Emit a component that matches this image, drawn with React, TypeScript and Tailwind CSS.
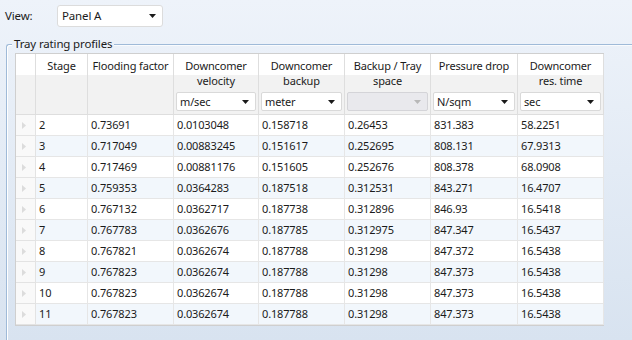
import React from "react";

const rows: string[][] = [
  ["2", "0.73691", "0.0103048", "0.158718", "0.26453", "831.383", "58.2251"],
  ["3", "0.717049", "0.00883245", "0.151617", "0.252695", "808.131", "67.9313"],
  ["4", "0.717469", "0.00881176", "0.151605", "0.252676", "808.378", "68.0908"],
  ["5", "0.759353", "0.0364283", "0.187518", "0.312531", "843.271", "16.4707"],
  ["6", "0.767132", "0.0362717", "0.187738", "0.312896", "846.93", "16.5418"],
  ["7", "0.767783", "0.0362676", "0.187785", "0.312975", "847.347", "16.5437"],
  ["8", "0.767821", "0.0362674", "0.187788", "0.31298", "847.372", "16.5438"],
  ["9", "0.767823", "0.0362674", "0.187788", "0.31298", "847.373", "16.5438"],
  ["10", "0.767823", "0.0362674", "0.187788", "0.31298", "847.373", "16.5438"],
  ["11", "0.767823", "0.0362674", "0.187788", "0.31298", "847.373", "16.5438"],
];

type Col = { l1: string; l2?: string; unit?: string; disabled?: boolean };
const cols: Col[] = [
  { l1: "Stage" },
  { l1: "Flooding factor" },
  { l1: "Downcomer", l2: "velocity", unit: "m/sec" },
  { l1: "Downcomer", l2: "backup", unit: "meter" },
  { l1: "Backup / Tray", l2: "space", unit: "", disabled: true },
  { l1: "Pressure drop", unit: "N/sqm" },
  { l1: "Downcomer", l2: "res. time", unit: "sec" },
];

function Arrow({ color = "#1a1a1a" }: { color?: string }) {
  return (
    <svg width="7" height="4" viewBox="0 0 7 4" className="shrink-0">
      <path d="M0 0 H7 L3.5 4 Z" fill={color} />
    </svg>
  );
}

function Dropdown({ value, disabled }: { value: string; disabled?: boolean }) {
  return (
    <div
      className={
        disabled
          ? "mx-[2px] h-[19px] flex items-center justify-between pl-[4px] pr-[6px] rounded-[2px] border border-[#d4d4d8] bg-[#e9e9ed]"
          : "mx-[2px] h-[19px] flex items-center justify-between pl-[3px] pr-[6px] rounded-[2px] border border-[#d9d9d9] bg-white"
      }
    >
      <span className="leading-[17px]">{value}</span>
      <Arrow color={disabled ? "#b8b8b8" : "#1a1a1a"} />
    </div>
  );
}

export default function App() {
  return (
    <div
      className="w-[632px] h-[340px] overflow-hidden bg-gradient-to-b from-[#eef3fa] to-[#d8e3f0] text-[11px] tracking-[-0.15px] text-[#1b1b1b]"
      style={{ fontFamily: '"Noto Sans", "Open Sans", sans-serif' }}
    >
      {/* View bar */}
      <div className="flex items-center pt-[5px] pl-[5px] h-[27px]">
        <span className="w-[52px] text-[11.5px]">View:</span>
        <div className="w-[106px] h-[22px] flex items-center justify-between pl-[4px] pr-[6px] bg-white border border-[#dcdcdc] rounded-[3px] text-[11.5px]">
          <span>Panel A</span>
          <Arrow />
        </div>
      </div>

      {/* Group box */}
      <div className="ml-[6px] mt-[9px]">
        <div className="flex items-center h-[16px]">
          <div className="w-[6px] h-[8px] self-end border-l border-t border-[#9fbad8] rounded-tl-[3px] shadow-[inset_1px_1px_0_#ffffff]" />
          <span className="px-[2px] text-[11.5px] leading-[16px]">Tray rating profiles</span>
          <div className="flex-1 h-[2px] mt-px border-t border-[#9fbad8] bg-white/70" />
        </div>
        <div className="border-l border-[#9fbad8] shadow-[inset_1px_0_0_#ffffff] pl-[8px] pt-px h-[300px]">
          <div className="w-[589px] border border-[#cfcfcf] bg-white">
            <div className="grid grid-cols-[20px_52px_86px_85px_86px_86px_87px_86px]">
              {/* header */}
              <div className="h-[61px] border-r border-b border-[#dedede] flex flex-col">
                <div className="h-[21px] bg-white" />
                <div className="flex-1 bg-[#f2f2f2]" />
              </div>
              {cols.map((c, i) => (
                <div key={i} className="h-[61px] border-r border-b border-[#dedede] flex flex-col">
                  <div className="h-[21px] bg-white pt-[4px] text-center leading-[15px] whitespace-nowrap">{c.l1}</div>
                  <div className="flex-1 bg-[#f2f2f2] flex flex-col">
                    <div className="h-[15px] text-center leading-[12px] whitespace-nowrap">{c.l2 ?? ""}</div>
                    {c.unit !== undefined && (
                      <div className="mt-[2px]">
                        <Dropdown value={c.unit} disabled={c.disabled} />
                      </div>
                    )}
                  </div>
                </div>
              ))}
              {/* body */}
              {rows.map((r, ri) => {
                const bg = ri % 2 === 1 ? "bg-[#f2f7fc]" : "bg-white";
                return (
                  <React.Fragment key={ri}>
                    <div className="h-[21px] border-r border-b border-[#e3e3e3] bg-[#f9f9f9] flex items-center pl-[6px]">
                      <svg width="4" height="7" viewBox="0 0 4 7">
                        <path d="M0 0 L4 3.5 L0 7 Z" fill="#dcdcdc" />
                      </svg>
                    </div>
                    {r.map((v, ci) => (
                      <div
                        key={ci}
                        className={`h-[21px] border-r border-b border-[#e6e6e6] pl-[3px] leading-[20px] whitespace-nowrap ${bg}`}
                      >
                        {v}
                      </div>
                    ))}
                  </React.Fragment>
                );
              })}
            </div>
          </div>
        </div>
      </div>
    </div>
  );
}
